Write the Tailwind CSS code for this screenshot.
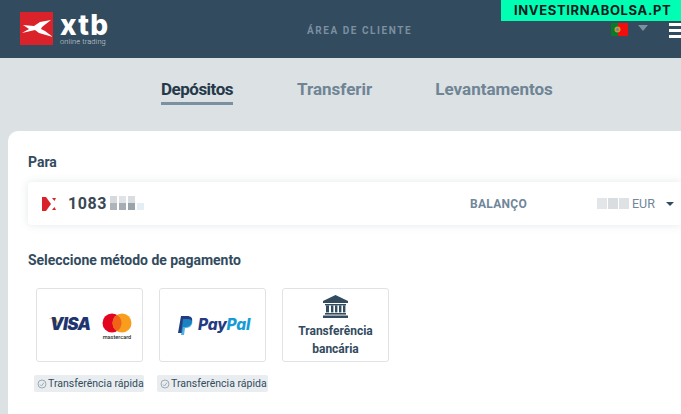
<!DOCTYPE html>
<html lang="pt"><head><meta charset="utf-8">
<script src="https://cdn.jsdelivr.net/npm/@tailwindcss/browser@4"></script>
</head>
<body class="w-[681px] h-[414px] overflow-hidden bg-[#dce1e4] font-['Roboto',sans-serif] relative">
<header class="h-[58px] bg-[#324b5e] relative flex items-start">
  <div class="flex items-start ml-[20px] mt-[12px]">
    <div class="w-[33px] h-[33px] bg-[#d9222a] flex items-center justify-center">
      <svg width="31" height="20" viewBox="0 0 31 20"><path d="M2 6 L13 7 L19 3 L30 1 L21 8 L20 10 L24 12 L32 18 L18 14 L14 11 L1 14 L8 10 Z" fill="#fff"/></svg>
    </div>
    <div class="ml-[7px] flex flex-col text-white">
      <span class="font-['Inter',sans-serif] font-extrabold text-[28px] leading-[24px] tracking-[1.2px] mt-[1px] h-[24px]">xtb</span>
      <span class="font-['Roboto',sans-serif] font-light text-[7.5px] leading-[9px] text-[#cfd6dc] w-[60px] whitespace-nowrap tracking-[.1px]">online trading</span>
    </div>
  </div>
  <div class="absolute left-[307px] top-[25px] text-[10px] leading-[12px] font-bold tracking-[1.55px] text-[#7b90a1] whitespace-nowrap">ÁREA DE CLIENTE</div>
  <svg class="absolute left-[611px] top-[23px]" width="17" height="13" viewBox="0 0 17 13"><rect width="7" height="13" fill="#0a7a2a"/><rect x="7" width="10" height="13" fill="#f20d0d"/><circle cx="6.5" cy="6.5" r="3" fill="#c79a2b"/><circle cx="6.5" cy="6.5" r="1.5" fill="#6d7fb0"/></svg>
  <div class="absolute left-[638px] top-[25px] w-0 h-0 border-x-[5.5px] border-x-transparent border-t-[6px] border-t-[#7b90a1]"></div>
  <div class="absolute left-[669px] top-[23px] w-[12px] flex flex-col gap-[3px]">
    <div class="h-[3px] bg-white"></div><div class="h-[3px] bg-white"></div><div class="h-[3px] bg-white"></div>
  </div>
  <div class="absolute left-[501px] top-0 w-[180px] h-[21px] bg-[#00ffb3] flex items-center pl-[13px] font-['Inter',sans-serif] font-bold text-[13px] tracking-[.65px] text-[#0b1a20] whitespace-nowrap">INVESTIRNABOLSA.PT</div>
</header>

<nav class="h-[73px] relative text-[17px] leading-[21px] font-bold text-[#6f8494]">
  <div class="flex pl-[161px] pt-[21px]">
    <div class="text-[#25394a] border-b-[3px] border-[#7a91a2] pb-[2px] h-[26px] tracking-[-.5px]">Depósitos</div>
    <div class="ml-[64px]">Transferir</div>
    <div class="ml-[63px]">Levantamentos</div>
  </div>
</nav>

<main class="ml-[8px] h-[283px] bg-white rounded-tl-[10px] pt-[23px] pl-[20px]">
  <h2 class="text-[14px] leading-[16px] font-bold text-[#324b5e]">Para</h2>
  <div class="mt-[12px] h-[43px] rounded-l-[4px] bg-white shadow-[0_0_8px_rgba(50,75,94,0.13)] flex items-center relative">
    <svg class="ml-[14px]" width="15" height="14" viewBox="0 0 15 14"><path d="M0 0 L4 0 L9 7 L4 14 L0 14 Z" fill="#d9222a"/><path d="M10 1 L14 1 L12.5 4 Z M10 13 L14 13 L12.5 10 Z" fill="#d9222a"/></svg>
    <span class="ml-[11px] text-[16px] font-bold tracking-[.55px] text-[#3a4754]">1083</span>
    <div class="ml-[3px] -mt-[1px] grid grid-cols-[repeat(4,7px)] grid-rows-[7px_7px] gap-x-[2px]">
      <span class="bg-[#d6dadd]"></span><span class="bg-[#e0e3e5]"></span><span class="bg-[#dadde0]"></span><span></span>
      <span class="bg-[#aeb4ba]"></span><span class="bg-[#a6adb4]"></span><span class="bg-[#9aa2aa]"></span><span class="bg-[#e4eef5]"></span>
    </div>
    <span class="absolute left-[442px] top-[14px] text-[12px] leading-[16px] font-bold text-[#70869a] tracking-[.3px]">BALANÇO</span>
    <div class="absolute left-[569px] top-[16px] flex gap-[1px]">
      <span class="w-[10px] h-[11px] bg-[#e3e6e9]"></span><span class="w-[10px] h-[11px] bg-[#d9dde0]"></span><span class="w-[10px] h-[11px] bg-[#dfe2e5]"></span>
    </div>
    <span class="absolute left-[604px] top-[14px] text-[12.5px] leading-[16px] text-[#70869a]">EUR</span>
    <div class="absolute left-[638px] top-[20px] w-0 h-0 border-x-[4px] border-x-transparent border-t-[4px] border-t-[#324b5e]"></div>
  </div>

  <h2 class="mt-[27px] text-[14px] leading-[16px] font-bold text-[#324b5e] tracking-[-.03px]">Seleccione método de pagamento</h2>

  <div class="mt-[20px] ml-[8px] flex gap-[16px]">
    <div class="relative w-[107px] h-[74px] rounded-[3px] border border-[#dfe3e6] flex items-center pl-[12px]">
      <svg width="12" height="20" viewBox="0 0 12 20">
        <path d="M0 3 H7 L10 11 C8 7 4 4 0 3Z" fill="#f2a31d"/>
      </svg>
      <span class="absolute left-[13px] top-[25px] font-['Inter',sans-serif] italic font-black text-[17px] leading-[20px] tracking-[-.6px] text-[#1f3570]">VISA</span>
      <svg class="absolute left-[64px] top-[23px]" width="32" height="28" viewBox="0 0 32 28">
        <circle cx="11" cy="11" r="9.5" fill="#e1051f"/><circle cx="21" cy="11" r="9.5" fill="#f99d1c"/>
        <path d="M16 2.9 a9.5 9.5 0 0 1 0 16.2 a9.5 9.5 0 0 1 0 -16.2Z" fill="#f0641a"/>
        <text x="16" y="27" text-anchor="middle" font-family="Roboto" font-size="5.6" font-weight="500" fill="#2a2a2a">mastercard</text>
      </svg>
    </div>
    <div class="w-[107px] h-[74px] rounded-[3px] border border-[#dfe3e6] flex items-center pl-[18px]">
      <svg width="15" height="19" viewBox="0 0 15 19">
        <path d="M3 0 H9 C13 0 15 2 14 6 C13 10 10 11 7 11 H5 L4 17 H0 Z" fill="#253b80"/>
        <path d="M5 3 H10 C14 3 15 6 14 8 C13 11 10 12 8 12 H7 L6 19 H3 Z" fill="#179bd7" opacity=".75"/>
      </svg>
      <span class="ml-[5px] font-['Inter',sans-serif] italic font-extrabold text-[15.5px] leading-[20px] tracking-[-.2px] text-[#253b80]">Pay<span class="text-[#179bd7]">Pal</span></span>
    </div>
    <div class="w-[107px] h-[74px] rounded-[3px] border border-[#dfe3e6] flex flex-col items-center pt-[6px]">
      <svg width="25" height="23" viewBox="0 0 25 23" fill="#324b5e">
        <path d="M12.5 0 L25 6 V8 H0 V6 Z"/><rect x="2" y="9" width="21" height="1.4"/>
        <rect x="3" y="10.4" width="3" height="7"/><rect x="8" y="10.4" width="2.4" height="7"/><rect x="12" y="10.4" width="2.4" height="7"/><rect x="16" y="10.4" width="2.4" height="7"/><rect x="20" y="10.4" width="2.4" height="7"/>
        <rect x="2" y="18" width="21" height="1.6"/><rect x="0" y="20.5" width="25" height="2.5"/>
      </svg>
      <div class="mt-[4px] text-[12px] leading-[18px] font-bold text-[#324b5e] text-center">Transferência<br>bancária</div>
    </div>
  </div>

  <div class="mt-[13px] ml-[6px] flex gap-[13px]">
    <div class="w-[110px] h-[17px] bg-[#e9edef] rounded-[2px] flex items-center pl-[3px] text-[10.5px] text-[#324b5e] whitespace-nowrap">
      <svg width="10" height="10" viewBox="0 0 10 10" fill="none" stroke="#9fabb4"><circle cx="5" cy="5" r="4"/><path d="M3 5.5 L4.5 7 L7 3.5"/></svg>
      <span class="ml-[1px]">Transferência rápida</span>
    </div>
    <div class="w-[111px] h-[17px] bg-[#e9edef] rounded-[2px] flex items-center pl-[3px] text-[10.5px] text-[#324b5e] whitespace-nowrap">
      <svg width="10" height="10" viewBox="0 0 10 10" fill="none" stroke="#9fabb4"><circle cx="5" cy="5" r="4"/><path d="M3 5.5 L4.5 7 L7 3.5"/></svg>
      <span class="ml-[1px]">Transferência rápida</span>
    </div>
  </div>
</main>
</body></html>
